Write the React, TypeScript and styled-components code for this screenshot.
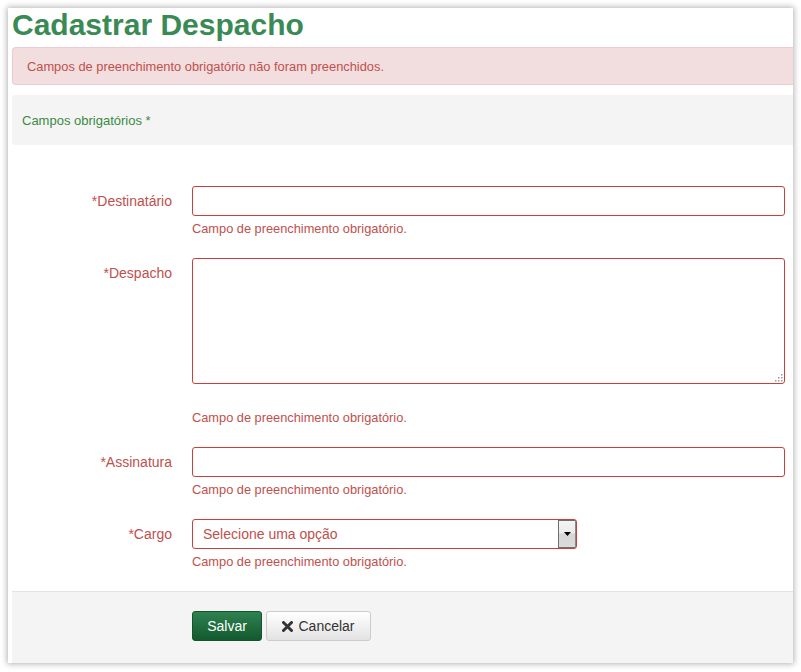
import React from "react";
import styled, { createGlobalStyle } from "styled-components";

const Global = createGlobalStyle`
  html, body { margin: 0; padding: 0; background: #ffffff; }
  body { padding: 8px; font-family: "Liberation Sans", Arial, sans-serif; }
  * { box-sizing: border-box; }
`;

const Panel = styled.div`
  width: 785px;
  height: 655px;
  background: #ffffff;
  box-shadow: 0 0 6px 1px rgba(0, 0, 0, 0.3);
  padding-left: 4px;
  display: flex;
  flex-direction: column;
`;

const Title = styled.h1`
  margin: 0 0 5px 0;
  height: 34px;
  line-height: 34px;
  font-size: 30px;
  font-weight: bold;
  color: #3a8a55;
`;

const Alert = styled.div`
  height: 38px;
  background: #f2dede;
  border: 1px solid #ebccd1;
  border-right: none;
  border-radius: 4px 0 0 4px;
  padding: 0 14px;
  display: flex;
  align-items: center;
  font-size: 12.85px;
  color: #c0504d;
  margin-bottom: 10px;
`;

const Legend = styled.div`
  height: 50px;
  background: #f4f4f4;
  border-radius: 3px 0 0 3px;
  padding: 0 10px;
  display: flex;
  align-items: center;
  font-size: 13px;
  color: #3a8a45;
`;

const Form = styled.div`
  padding-top: 41px;
  display: flex;
  flex-direction: column;
  flex: 1;
`;

const Row = styled.div`
  display: grid;
  grid-template-columns: 160px 593px;
  column-gap: 20px;
  margin-bottom: 21px;
`;

const Label = styled.label`
  text-align: right;
  font-size: 14px;
  line-height: 16px;
  padding-top: 7px;
  color: #c0504d;
`;

const Field = styled.div`
  display: flex;
  flex-direction: column;
  align-items: flex-start;
`;

const Input = styled.div`
  width: 593px;
  height: 30px;
  border: 1px solid #c9403d;
  border-radius: 3px;
  background: #fff;
`;

const AreaWrap = styled.div`
  position: relative;
  width: 593px;
  height: 126px;
  border: 1px solid #c9403d;
  border-radius: 3px;
  margin-bottom: 21px;
`;

const Grip = styled.svg`
  position: absolute;
  right: 1px;
  bottom: 1px;
`;

const Select = styled.div<{ $w: number }>`
  width: ${(p) => p.$w}px;
  height: 30px;
  border: 1px solid #c9403d;
  border-radius: 3px;
  display: flex;
  align-items: stretch;
  font-size: 14px;
  color: #c0504d;
`;

const SelectText = styled.div`
  flex: 1;
  display: flex;
  align-items: center;
  padding-left: 10px;
`;

const DropButton = styled.div`
  width: 18px;
  margin: 0;
  border: 1px solid #6f6f6f;
  border-right-color: #8a8a8a;
  background: linear-gradient(#f3f3f3 0%, #ececec 45%, #d6d6d6 50%, #dcdcdc 100%);
  display: flex;
  align-items: flex-start;
  justify-content: center;
  padding-top: 11px;
`;

const Error = styled.div`
  margin-top: 5px;
  font-size: 12.8px;
  line-height: 16px;
  color: #c0504d;
`;

const Footer = styled.div`
  margin-top: auto;
  height: 72px;
  background: #f4f4f4;
  border-top: 1px solid #e3e3e3;
  padding: 19px 0 0 180px;
  display: flex;
  gap: 4px;
  align-items: flex-start;
`;

const Button = styled.button<{ $primary?: boolean }>`
  height: 30px;
  width: ${(p) => (p.$primary ? "70px" : "105px")};
  border-radius: 3px;
  font-family: "Liberation Sans", Arial, sans-serif;
  font-size: 14px;
  display: flex;
  align-items: center;
  justify-content: center;
  gap: 5px;
  padding: 0;
  border: 1px solid ${(p) => (p.$primary ? "#15522e" : "#cccccc")};
  color: ${(p) => (p.$primary ? "#ffffff" : "#333333")};
  background: ${(p) =>
    p.$primary
      ? "linear-gradient(#2f8150, #125a2f)"
      : "linear-gradient(#ffffff, #e3e3e3)"};
`;

const fields: { label: string; kind: "input" | "area" | "select" }[] = [
  { label: "*Destinatário", kind: "input" },
  { label: "*Despacho", kind: "area" },
  { label: "*Assinatura", kind: "input" },
  { label: "*Cargo", kind: "select" },
];

const GripIcon = () => (
  <Grip width="9" height="9" viewBox="0 0 9 9">
    {[
      [7, 1],
      [7, 4],
      [4, 4],
      [7, 7],
      [4, 7],
      [1, 7],
    ].map(([x, y], i) => (
      <rect key={i} x={x} y={y} width="1.5" height="1.5" fill="#9a9a9a" />
    ))}
  </Grip>
);

export default function App() {
  return (
    <>
      <Global />
      <Panel>
        <Title>Cadastrar Despacho</Title>
        <Alert>Campos de preenchimento obrigatório não foram preenchidos.</Alert>
        <Legend>Campos obrigatórios *</Legend>
        <Form>
          {fields.map((f) => (
            <Row key={f.label}>
              <Label>{f.label}</Label>
              <Field>
                {f.kind === "input" && <Input />}
                {f.kind === "area" && (
                  <AreaWrap>
                    <GripIcon />
                  </AreaWrap>
                )}
                {f.kind === "select" && (
                  <Select $w={385}>
                    <SelectText>Selecione uma opção</SelectText>
                    <DropButton>
                      <svg width="7" height="4" viewBox="0 0 7 4">
                        <path d="M0 0H7L3.5 4Z" fill="#000" />
                      </svg>
                    </DropButton>
                  </Select>
                )}
                <Error>Campo de preenchimento obrigatório.</Error>
              </Field>
            </Row>
          ))}
          <Footer>
            <Button $primary>Salvar</Button>
            <Button>
              <svg width="11" height="11" viewBox="0 0 11 11">
                <path
                  d="M1.5 1.5L9.5 9.5M9.5 1.5L1.5 9.5"
                  stroke="#333"
                  strokeWidth="3"
                  strokeLinecap="round"
                />
              </svg>
              Cancelar
            </Button>
          </Footer>
        </Form>
      </Panel>
    </>
  );
}
